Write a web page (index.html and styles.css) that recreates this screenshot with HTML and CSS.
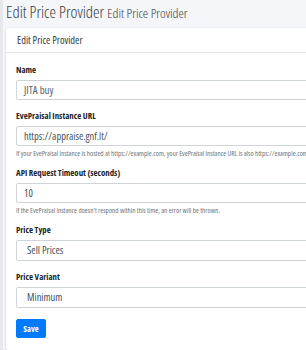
FILE: index.html
```html
<!DOCTYPE html>
<html lang="en">
<head>
    <meta charset="UTF-8">
    <meta name="viewport" content="width=device-width, initial-scale=1.0">
    <title>Edit Price Provider</title>
    <link rel="stylesheet" href="styles.css">
</head>
<body>
    <div class="sidebar-edge"></div>

    <div class="content-wrapper">
        <div class="content-header">
            <h1>Edit Price Provider <small>Edit Price Provider</small></h1>
        </div>

        <div class="card">
            <div class="card-header">Edit Price Provider</div>
            <form class="card-body">
                <div class="form-group">
                    <label>Name</label>
                    <div class="form-control name-input">JITA buy</div>
                </div>

                <div class="form-group">
                    <label>EvePraisal Instance URL</label>
                    <div class="form-control">https://appraise.gnf.lt/</div>
                    <p class="help">If your EvePraisal instance is hosted at https://example.com, your EvePraisal instance URL is also https://example.com/.</p>
                </div>

                <div class="form-group">
                    <label>API Request Timeout (seconds)</label>
                    <div class="form-control">10</div>
                    <p class="help">If the EvePraisal instance doesn't respond within this time, an error will be thrown.</p>
                </div>

                <div class="form-group">
                    <label>Price Type</label>
                    <div class="form-control select">Sell Prices</div>
                </div>

                <div class="form-group">
                    <label>Price Variant</label>
                    <div class="form-control select">Minimum</div>
                </div>

                <button type="button" class="btn-save">Save</button>
            </form>
        </div>
    </div>
</body>
</html>
```

FILE: styles.css
```css
* {
    margin: 0;
    padding: 0;
    box-sizing: border-box;
    font-family: 'Open Sans', Arial, sans-serif;
    font-stretch: 80%;
}

body {
    background: #f4f6f9;
    height: 350px;
    overflow: hidden;
    display: flex;
    color: #212529;
}

.sidebar-edge {
    width: 3px;
    flex-shrink: 0;
    background: #e6e8eb;
}

.content-wrapper {
    flex-grow: 1;
    min-width: 0;
    padding-left: 3px;
}

/* Page title */
.content-header {
    height: 28px;
    padding-top: 2px;
}

.content-header h1 {
    font-size: 16.5px;
    font-weight: 300;
    line-height: 20px;
    white-space: nowrap;
    color: #343a40;
}

.content-header small {
    font-size: 13.5px;
    color: #343a40;
}

/* Card */
.card {
    margin-right: -20px;
    background: white;
    border-radius: 2px;
    box-shadow: 0 0 1px rgba(0, 0, 0, 0.125), 0 1px 2px rgba(0, 0, 0, 0.2);
}

.card-header {
    height: 25px;
    line-height: 24px;
    padding: 0 11px;
    font-size: 10.4px;
    color: #343a40;
    border-bottom: 1px solid #e3e5e8;
}

.card-body {
    padding: 12px 10px 12px;
}

.form-group {
    margin-bottom: 11px;
}

.form-group label {
    display: block;
    font-size: 8.8px;
    font-weight: bold;
    line-height: 10px;
    margin-bottom: 5px;
    white-space: nowrap;
}

.form-control {
    height: 20px;
    line-height: 18px;
    padding: 0 7px;
    border: 1px solid #ced4da;
    border-radius: 2px;
    font-size: 10.4px;
    color: #495057;
    white-space: nowrap;
}

.name-input {
    font-size: 10.8px;
    color: #5a6168;
}

.select {
    height: 21px;
    line-height: 19px;
    padding-left: 10px;
    font-size: 10.5px;
}

.help {
    margin-top: 3px;
    font-size: 7.2px;
    line-height: 8px;
    color: #6c757d;
    white-space: nowrap;
}

.btn-save {
    display: block;
    width: 30px;
    height: 19px;
    background: #007bff;
    color: white;
    border: 1px solid #007bff;
    border-radius: 2px;
    font-size: 8.5px;
    font-weight: bold;
}
```
